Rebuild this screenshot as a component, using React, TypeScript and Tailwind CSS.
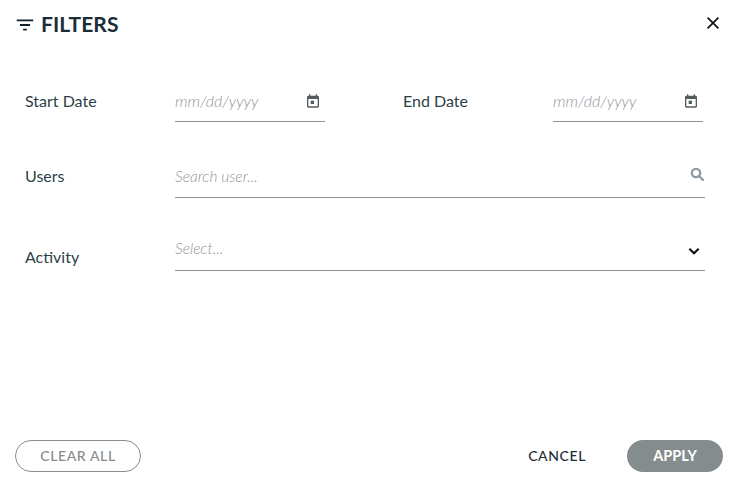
import React from "react";

function Calendar() {
  return (
    <svg width="16" height="16" viewBox="0 0 24 24" fill="#555c5e" className="shrink-0 -mt-[1px]">
      <path d="M19 4h-1V2h-2v2H8V2H6v2H5c-1.11 0-2 .9-2 2v14a2 2 0 0 0 2 2h14c1.1 0 2-.9 2-2V6c0-1.1-.9-2-2-2zm0 16H5V9h14v11z" />
      <path d="M8.5 11.5h5v5h-5z" />
    </svg>
  );
}

function DateField({ width }: { width: string }) {
  return (
    <div className={`${width} h-10 flex items-center justify-between border-b border-[#8f9596] pr-[4px]`}>
      <span className="text-[16px] italic font-light text-[#92969b] -mt-[2px]">mm/dd/yyyy</span>
      <Calendar />
    </div>
  );
}

export default function App() {
  return (
    <div className="w-[739px] h-[482px] bg-white flex flex-col text-[#2c3f46]" style={{ fontFamily: "Lato, 'Open Sans', sans-serif" }}>
      <header className="h-[50px] flex items-center justify-between pl-[14px] pr-[16px]">
        <div className="flex items-center gap-[5px]">
          <svg width="22" height="22" viewBox="0 0 24 24" fill="#14202a" className="-mt-[1px]">
            <path d="M3 6h18v2H3zM6.5 11h11v2h-11zM10 16h4v2h-4z" />
          </svg>
          <h1 className="text-[21px] leading-[26px] -mt-[2px] font-bold tracking-[0.1px] text-[#1a2d38]">FILTERS</h1>
        </div>
        <svg width="20" height="20" viewBox="0 0 24 24" fill="none" stroke="#111" strokeWidth="2" className="-mt-[4px]">
          <path d="M5.5 5.5l13 13M18.5 5.5l-13 13" />
        </svg>
      </header>

      <main className="flex-1 pl-[25px] pr-[34px] pt-[32px] flex flex-col">
        <div className="flex items-center h-10 text-[16px]">
          <span className="w-[150px] -mt-[3px]">Start Date</span>
          <DateField width="w-[150px]" />
          <span className="w-[150px] ml-[78px] -mt-[3px]">End Date</span>
          <DateField width="w-[150px]" />
        </div>

        <div className="flex items-center h-10 mt-[36px] text-[16px]">
          <span className="w-[150px] -mt-[5px]">Users</span>
          <div className="flex-1 h-10 flex items-center justify-between border-b border-[#8f9596] pr-[1px]">
            <span className="text-[15.5px] italic font-light text-[#92969b] -mt-[1px]">Search user...</span>
            <svg width="14" height="14" viewBox="0 0 14 14" fill="none" stroke="#8d99a3" strokeWidth="2.3" className="-mt-[8px]">
              <circle cx="6" cy="6" r="4.2" />
              <path d="M9 9l4 4" strokeLinecap="round" />
            </svg>
          </div>
        </div>

        <div className="flex h-10 mt-[33px] text-[16px]">
          <span className="w-[150px] self-end leading-[24px] mb-[2px]">Activity</span>
          <div className="flex-1 h-10 flex items-center justify-between border-b border-[#8f9596] pr-[3px] pb-[3px]">
            <span className="text-[15.5px] italic font-light text-[#92969b] -mt-[1px]">Select...</span>
            <svg width="16" height="16" viewBox="0 0 24 24" fill="none" stroke="#111" strokeWidth="3.2" className="mt-[3px]">
              <path d="M5 8.5l7 7 7-7" />
            </svg>
          </div>
        </div>
      </main>

      <footer className="flex items-center justify-between pl-[15px] pr-[16px] pb-[10px]">
        <button className="w-[126px] h-8 pb-[2px] rounded-full border border-[#868e8f] text-[14px] font-medium tracking-[0.6px] text-[#858c8e]">
          CLEAR ALL
        </button>
        <div className="flex items-center gap-[41px]">
          <button className="h-8 pb-[2px] text-[14px] font-medium tracking-[0.6px] text-[#1d2c36]">CANCEL</button>
          <button className="w-[96px] h-8 rounded-full bg-[#848c8d] text-[14.5px] font-bold text-white">APPLY</button>
        </div>
      </footer>
    </div>
  );
}
